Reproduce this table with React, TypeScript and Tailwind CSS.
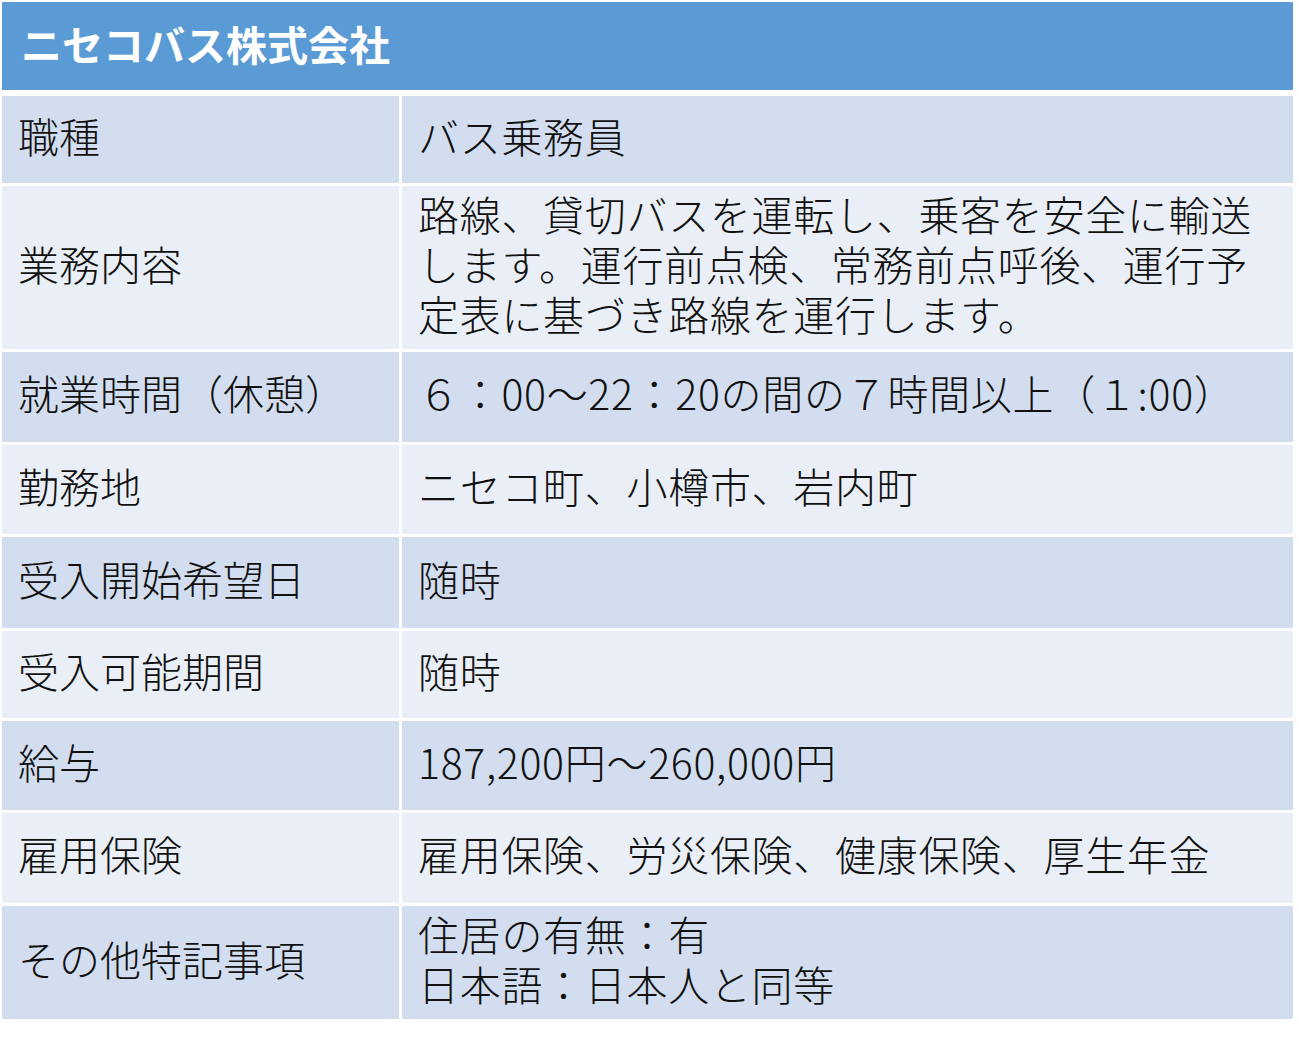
import React from "react";

const rows: { label: string; value: React.ReactNode; h: string; dark: boolean }[] = [
  { label: "職種", value: "バス乗務員", h: "h-[87px]", dark: true },
  {
    label: "業務内容",
    value: (
      <>
        路線、貸切バスを運転し、乗客を安全に輸送
        <br />
        します。運行前点検、常務前点呼後、運行予
        <br />
        定表に基づき路線を運行します。
      </>
    ),
    h: "h-[163px]",
    dark: false,
  },
  { label: "就業時間（休憩）", value: "６：00～22：20の間の７時間以上（１:00）", h: "h-[90px]", dark: true },
  { label: "勤務地", value: "ニセコ町、小樽市、岩内町", h: "h-[89px]", dark: false },
  { label: "受入開始希望日", value: "随時", h: "h-[91px]", dark: true },
  { label: "受入可能期間", value: "随時", h: "h-[87px]", dark: false },
  { label: "給与", value: "187,200円～260,000円", h: "h-[89px]", dark: true },
  { label: "雇用保険", value: "雇用保険、労災保険、健康保険、厚生年金", h: "h-[90px]", dark: false },
  {
    label: "その他特記事項",
    value: (
      <>
        住居の有無：有
        <br />
        日本語：日本人と同等
      </>
    ),
    h: "h-[113px]",
    dark: true,
  },
];

export default function App() {
  return (
    <div
      className="w-[1299px] h-[1037px] bg-white pt-[2px] pl-[2px]"
      style={{ fontFamily: '"Noto Sans CJK JP", "Noto Sans", sans-serif' }}
    >
      <div className="w-[1291px] flex flex-col">
        <div className="h-[88px] bg-[#5b9bd5] flex items-center pl-[19px] pb-[6px]">
          <span className="text-white font-bold text-[41px] leading-none whitespace-nowrap">ニセコバス株式会社</span>
        </div>
        <div className="mt-[6px] flex flex-col gap-[3px]">
          {rows.map((r, i) => (
            <div key={i} className={`flex gap-[3px] ${r.h}`}>
              <div
                className={`w-[397px] flex items-center pl-[16px] pb-[10px] text-[41px] font-light text-[#111] leading-[50px] whitespace-nowrap ${
                  r.dark ? "bg-[#d2deef]" : "bg-[#eaeff7]"
                }`}
              >
                {r.label}
              </div>
              <div
                className={`flex-1 flex items-center pl-[16px] pb-[10px] text-[41px] font-light text-[#111] leading-[50px] tracking-[0.7px] whitespace-nowrap ${
                  r.dark ? "bg-[#d2deef]" : "bg-[#eaeff7]"
                }`}
              >
                <div>{r.value}</div>
              </div>
            </div>
          ))}
        </div>
      </div>
    </div>
  );
}
